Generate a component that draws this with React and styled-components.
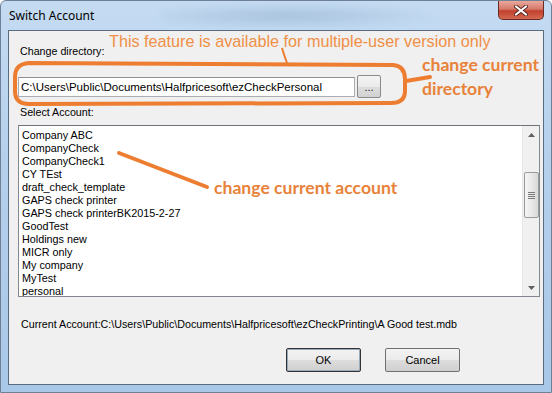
import React from "react";
import styled, { createGlobalStyle } from "styled-components";

const GlobalStyle = createGlobalStyle`
  html, body { margin: 0; padding: 0; }
  body {
    width: 552px; height: 393px; overflow: hidden;
    font-family: "Liberation Sans", Arial, sans-serif;
    background: #ffffff;
  }
  * { box-sizing: border-box; }
`;

const ORANGE = "#ed7d31";

const Window = styled.div`
  position: relative;
  width: 552px;
  height: 393px;
  display: flex;
  flex-direction: column;
  border: 1px solid #6d8096;
  border-radius: 6px 6px 0 0;
  background: linear-gradient(180deg, #c4dbf2 0%, #b6d0ec 40%, #a9c7e7 100%);
  overflow: hidden;
`;

const TitleBar = styled.div`
  height: 29px;
  display: flex;
  justify-content: space-between;
  align-items: flex-start;
  padding: 0 7px 0 8px;
  position: relative;
`;

const TitleText = styled.div`
  font-family: "Noto Sans", "Liberation Sans", sans-serif;
  font-size: 12px;
  line-height: 29px;
  color: #000;
`;

const TitleHaze = styled.div`
  position: absolute;
  left: 160px;
  top: 2px;
  width: 280px;
  height: 26px;
  background: radial-gradient(ellipse at 45% 50%, rgba(120,150,185,0.35), rgba(120,150,185,0) 70%);
  filter: blur(3px);
  pointer-events: none;
`;

const CloseButton = styled.div`
  width: 46px;
  height: 19px;
  border: 1px solid #6b2b23;
  border-top: none;
  border-radius: 0 0 5px 5px;
  background: linear-gradient(180deg, #e9a99c 0%, #d6786a 45%, #c2402e 55%, #d56a51 100%);
  display: flex;
  align-items: center;
  justify-content: center;
  position: relative;
  z-index: 1;
`;

const Body = styled.div`
  flex: 1;
  display: flex;
  padding: 0 7px 7px 7px;
`;

const Client = styled.div`
  flex: 1;
  display: flex;
  flex-direction: column;
  background: #f0f0f0;
  border: 1px solid #5a6b80;
  padding: 14px 3px 0 9px;
`;

const Label = styled.div`
  font-size: 10.7px;
  line-height: 13px;
  color: #000;
  margin-top: ${(p) => p.$mt || 0}px;
  margin-left: ${(p) => p.$ml || 2}px;
  white-space: nowrap;
`;

const DirRow = styled.div`
  display: flex;
  align-items: center;
  gap: 2px;
  margin-top: 17px;
  height: 23px;
`;

const TextBox = styled.div`
  width: 337px;
  height: 20px;
  background: #fff;
  border: 1px solid #abadb3;
  border-top-color: #8e9095;
  font-size: 11.5px;
  line-height: 18px;
  padding-left: 2px;
  color: #000;
  white-space: nowrap;
  overflow: hidden;
`;

const SmallButton = styled.div`
  width: 24px;
  height: 23px;
  border: 1px solid #8a8a8a;
  border-radius: 2px;
  background: linear-gradient(180deg, #f4f4f4 0%, #ebebeb 50%, #dddddd 51%, #d2d2d2 100%);
  font-size: 11px;
  line-height: 22px;
  text-align: center;
  color: #222;
`;

const ListBox = styled.div`
  margin-top: 6px;
  height: 172px;
  width: 522px;
  display: flex;
  background: #fff;
  border: 1px solid #828790;
  border-top-color: #6e7279;
`;

const Items = styled.div`
  flex: 1;
  padding: 3px 0 0 3px;
  overflow: hidden;
`;

const Item = styled.div`
  font-size: 10.8px;
  line-height: 13px;
  color: #000;
  white-space: nowrap;
`;

const ScrollBar = styled.div`
  width: 17px;
  display: flex;
  flex-direction: column;
  background: #f0f0f0;
  border-left: 1px solid #e8e8e8;
`;

const ScrollArrow = styled.div`
  height: 17px;
  display: flex;
  align-items: center;
  justify-content: center;
`;

const Track = styled.div`
  flex: 1;
  padding-top: 29px;
`;

const Thumb = styled.div`
  margin-left: 1px;
  width: 15px;
  height: 46px;
  border: 1px solid #9a9a9a;
  border-radius: 2px;
  background: linear-gradient(90deg, #f4f4f4 0%, #e9e9e9 50%, #d8d8d8 100%);
  display: flex;
  flex-direction: column;
  align-items: center;
  justify-content: center;
  gap: 1px;
`;

const Grip = styled.div`
  width: 7px;
  height: 1px;
  background: #7a7a7a;
`;

const ButtonRow = styled.div`
  display: flex;
  justify-content: flex-end;
  gap: 24px;
  margin-top: 17px;
  padding-right: 80px;
`;

const DialogButton = styled.div`
  width: 75px;
  height: 24px;
  border: 1px solid ${(p) => (p.$default ? "#333" : "#707070")};
  box-shadow: ${(p) => (p.$default ? "inset 0 0 0 1px #9ab" : "none")};
  border-radius: 2px;
  background: linear-gradient(180deg, #f3f3f3 0%, #ebebeb 50%, #dddddd 51%, #cfcfcf 100%);
  font-size: 11px;
  line-height: 22px;
  text-align: center;
  color: #000;
`;

const Overlay = styled.svg`
  position: absolute;
  left: 0;
  top: 0;
  pointer-events: none;
`;

const Note = styled.div`
  position: absolute;
  left: ${(p) => p.$x}px;
  top: ${(p) => p.$y}px;
  color: #f08f45;
  font-size: 16.2px;
  line-height: 17px;
  white-space: nowrap;
  pointer-events: none;
`;

const Callout = styled.div`
  position: absolute;
  left: ${(p) => p.$x}px;
  top: ${(p) => p.$y}px;
  color: #e8823a;
  font-family: Lato, "Open Sans", sans-serif;
  font-weight: 700;
  font-size: 17.6px;
  line-height: 24px;
  white-space: nowrap;
  pointer-events: none;
`;

const accounts = [
  "Company ABC",
  "CompanyCheck",
  "CompanyCheck1",
  "CY TEst",
  "draft_check_template",
  "GAPS check printer",
  "GAPS check printerBK2015-2-27",
  "GoodTest",
  "Holdings new",
  "MICR only",
  "My company",
  "MyTest",
  "personal",
];

export default function App() {
  return (
    <>
      <GlobalStyle />
      <Window>
        <TitleBar>
          <TitleHaze />
          <TitleText>Switch Account</TitleText>
          <CloseButton>
            <svg width="14" height="11" viewBox="0 0 14 11">
              <path d="M2 1.5 L12 9.5 M12 1.5 L2 9.5" stroke="#5a2a22" strokeWidth="4" strokeLinecap="round" />
              <path d="M2 1.5 L12 9.5 M12 1.5 L2 9.5" stroke="#ffffff" strokeWidth="2.2" strokeLinecap="round" />
            </svg>
          </CloseButton>
        </TitleBar>
        <Body>
          <Client>
            <Label>Change directory:</Label>
            <DirRow>
              <TextBox>C:\Users\Public\Documents\Halfpricesoft\ezCheckPersonal</TextBox>
              <SmallButton>...</SmallButton>
            </DirRow>
            <Label $mt={8}>Select Account:</Label>
            <ListBox>
              <Items>
                {accounts.map((a) => (
                  <Item key={a}>{a}</Item>
                ))}
              </Items>
              <ScrollBar>
                <ScrollArrow>
                  <svg width="7" height="4" viewBox="0 0 7 4">
                    <path d="M0 4 L3.5 0 L7 4 Z" fill="#606060" />
                  </svg>
                </ScrollArrow>
                <Track>
                  <Thumb>
                    <Grip />
                    <Grip />
                    <Grip />
                    <Grip />
                  </Thumb>
                </Track>
                <ScrollArrow>
                  <svg width="7" height="4" viewBox="0 0 7 4">
                    <path d="M0 0 L7 0 L3.5 4 Z" fill="#606060" />
                  </svg>
                </ScrollArrow>
              </ScrollBar>
            </ListBox>
            <Label $mt={21} $ml={3}>
              Current Account:C:\Users\Public\Documents\Halfpricesoft\ezCheckPrinting\A Good test.mdb
            </Label>
            <ButtonRow>
              <DialogButton $default>OK</DialogButton>
              <DialogButton>Cancel</DialogButton>
            </ButtonRow>
          </Client>
        </Body>

        <Overlay width="552" height="393" viewBox="0 0 552 393">
          <path
            d="M28 62 L392 64 Q404 65 404 78 L404 90 Q404 102 390 102 L28 103 Q14 103 14 90 L14 76 Q14 63 28 62 Z"
            fill="none"
            stroke={ORANGE}
            strokeWidth="4"
            strokeLinejoin="round"
          />
          <path d="M405 80 L429 76" stroke={ORANGE} strokeWidth="4" strokeLinecap="round" />
          <path d="M281 47 Q283 54 286 62" stroke={ORANGE} strokeWidth="2" fill="none" />
          <path d="M118 152 L206 186" stroke={ORANGE} strokeWidth="4" strokeLinecap="round" />
        </Overlay>
        <Note $x={108} $y={32}>This feature is available for multiple-user version only</Note>
        <Callout $x={421} $y={52}>
          change current
          <br />
          directory
        </Callout>
        <Callout $x={213} $y={175}>change current account</Callout>
      </Window>
    </>
  );
}
